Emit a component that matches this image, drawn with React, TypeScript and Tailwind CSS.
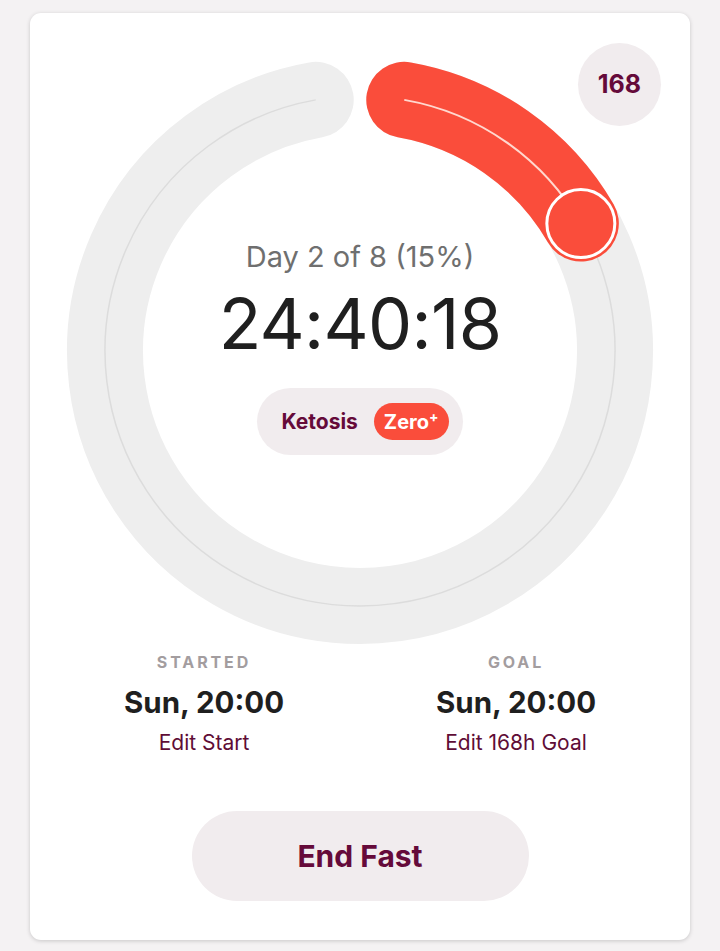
const RED = '#fa4d3b';

function Ring() {
  // center 300,300 r=255; gap of 20deg at the top, progress 10deg -> 60deg
  return (
    <svg width="600" height="600" viewBox="0 0 600 600" className="block">
      <path
        d="M 344.28 48.87 A 255 255 0 1 1 255.72 48.87"
        fill="none"
        stroke="#eeeeee"
        strokeWidth="76"
        strokeLinecap="round"
      />
      <path
        d="M 344.28 48.87 A 255 255 0 1 1 255.72 48.87"
        fill="none"
        stroke="#dcdcdc"
        strokeWidth="1.5"
      />
      <path
        d="M 344.28 48.87 A 255 255 0 0 1 520.84 172.5"
        fill="none"
        stroke={RED}
        strokeWidth="76"
        strokeLinecap="round"
      />
      <path
        d="M 344.28 48.87 A 255 255 0 0 1 520.84 172.5"
        fill="none"
        stroke="#ffd8cf"
        strokeWidth="2"
      />
      <circle cx="520.84" cy="172.5" r="34" fill={RED} stroke="#ffffff" strokeWidth="3" />
    </svg>
  );
}

function TimeCol({ label, value, link }: { label: string; value: string; link: string }) {
  return (
    <div className="flex flex-col items-center">
      <div className="text-[16px] leading-[20px] font-bold tracking-[0.18em] text-[#a39d9f]">{label}</div>
      <div className="mt-[12px] text-[29.5px] leading-[36px] font-bold text-[#1f1f1f]">{value}</div>
      <div className="mt-[10px] text-[21px] leading-[26px] text-[#5f0d36]">{link}</div>
    </div>
  );
}

export default function App() {
  return (
    <div
      className="min-h-[951px] bg-[#f4f2f3] pt-[13px] px-[30px]"
      style={{ fontFamily: 'Inter, "Open Sans", sans-serif' }}
    >
      <div className="relative bg-white rounded-[11px] shadow-[0_1px_4px_rgba(0,0,0,0.18)] pt-[38px] pb-[39px]">
        <div className="absolute top-[30px] right-[29px] w-[83px] h-[83px] rounded-full bg-[#f1ecee] flex items-center justify-center text-[25px] font-bold text-[#650a3a]">
          168
        </div>

        <div className="relative flex justify-center">
          <Ring />
          <div className="absolute left-0 right-0 top-[188px] flex flex-col items-center">
            <div className="text-[29px] leading-[36px] text-[#6f6f6f]">Day 2 of 8 (15%)</div>
            <div className="mt-[13px] text-[70px] leading-[72px] text-[#1f1f1f] tracking-[-0.01em]">24:40:18</div>
            <div className="mt-[28px] h-[67px] pl-[24px] pr-[14px] rounded-full bg-[#f1ecee] flex items-center gap-[16px]">
              <span className="text-[21px] font-bold text-[#650a3a]">Ketosis</span>
              <span className="h-[37px] px-[10px] rounded-full bg-[#fa4d3b] flex items-center text-[20px] font-bold text-white">
                Zero<span className="text-[14px] leading-none -mt-[9px]">+</span>
              </span>
            </div>
          </div>
        </div>

        <div className="mt-[1px] grid grid-cols-2 px-[18px]">
          <TimeCol label="STARTED" value="Sun, 20:00" link="Edit Start" />
          <TimeCol label="GOAL" value="Sun, 20:00" link="Edit 168h Goal" />
        </div>

        <div className="mt-[55px] flex justify-center">
          <button className="w-[337px] h-[90px] rounded-full bg-[#f1ecee] text-[30px] font-bold text-[#650a3a]">
            End Fast
          </button>
        </div>
      </div>
    </div>
  );
}
